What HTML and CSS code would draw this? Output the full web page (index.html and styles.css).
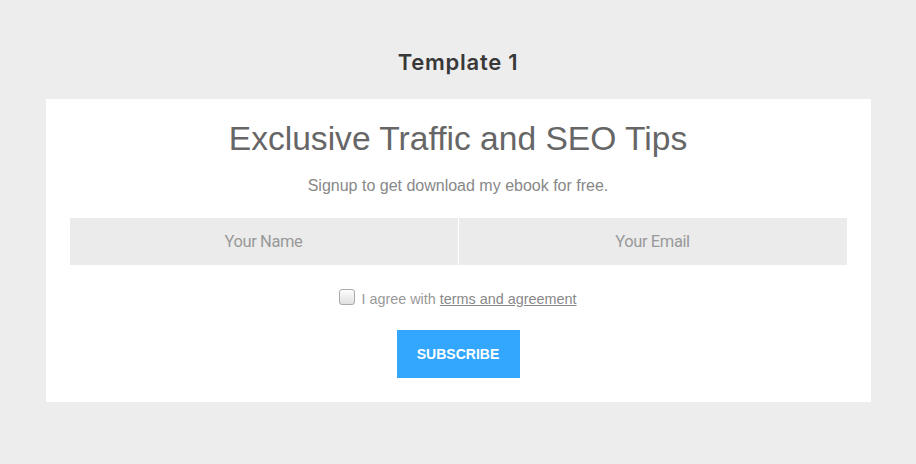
FILE: index.html
```html
<!DOCTYPE html>
<html>
<head>
<meta charset="utf-8">
<link rel="stylesheet" href="styles.css">
</head>
<body>
<div class="page">
  <h2 class="tpl-title">Template 1</h2>
  <div class="card">
    <h1 class="headline">Exclusive Traffic and SEO Tips</h1>
    <p class="sub">Signup to get download my ebook for free.</p>
    <div class="fields">
      <div class="field">Your Name</div>
      <div class="field">Your Email</div>
    </div>
    <label class="agree"><span class="box"></span><span>I agree with <u>terms and agreement</u></span></label>
    <button class="btn">SUBSCRIBE</button>
  </div>
</div>
</body>
</html>
```
FILE: styles.css
```css
html, body { margin: 0; padding: 0; }
body { background: #ededed; font-family: "Liberation Sans", Arial, sans-serif; }
.page { width: 825px; margin: 0 auto; padding-top: 47px; }
.tpl-title { margin: 0 0 22px; text-align: center; font-family: "Inter", sans-serif; font-weight: 600; font-size: 22px; line-height: 30px; letter-spacing: 0.75px; color: #383838; }
.card { background: #fff; padding: 18px 24px 24px; display: flex; flex-direction: column; align-items: center; }
.headline { margin: 0; font-weight: 400; font-size: 33.6px; line-height: 44px; color: #666; }
.sub { margin: 15px 0 0; font-size: 16px; line-height: 20px; color: #888; }
.fields { margin-top: 22px; display: flex; width: 100%; gap: 1px; }
.field { flex: 1; height: 47px; background: #ebebeb; display: flex; align-items: center; justify-content: center; color: #999; font-size: 16.5px; font-family: "Roboto", sans-serif; letter-spacing: -0.4px; }
.agree { margin-top: 24px; display: flex; align-items: flex-end; gap: 6px; font-size: 14.4px; line-height: 18px; color: #999; }
.box { width: 14px; height: 14px; margin-bottom: 3px; border: 1px solid #aaa; border-radius: 3px; background: linear-gradient(#fdfdfd, #e0e0e0); }
.agree u { color: #888; }
.btn { margin-top: 22px; width: 123px; height: 48px; border: 0; background: #33a6fd; color: #fff; font-family: "Liberation Sans", Arial, sans-serif; font-weight: 700; font-size: 14px; }
```
